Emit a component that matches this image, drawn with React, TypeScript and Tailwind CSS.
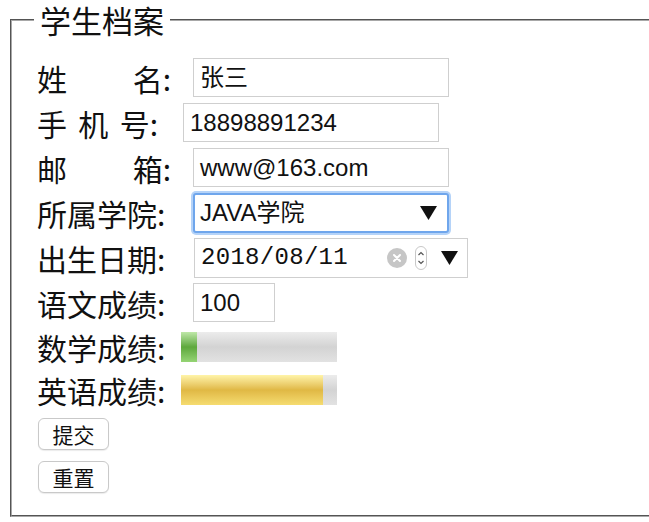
import React from "react";

const cjk = { fontFamily: '"Noto Sans CJK SC", sans-serif' };
const sans = { fontFamily: '"Liberation Sans", "Noto Sans CJK SC", sans-serif' };

function Row({ children, tall = true }: { children: React.ReactNode; tall?: boolean }) {
  return (
    <div className={`flex items-center pl-[25px] ${tall ? "h-[45px]" : "h-[43px]"}`}>
      {children}
    </div>
  );
}

function Label({ parts, width, span }: { parts: string[]; width: number; span?: number }) {
  return (
    <div className="shrink-0 text-[30px] leading-none text-[#111]" style={{ ...cjk, width }}>
      <span className="flex justify-between" style={span ? { width: span } : undefined}>
        {parts.map((p) => (
          <span key={p}>{p}</span>
        ))}
      </span>
    </div>
  );
}

function TextBox({ value, width }: { value: string; width: number }) {
  return (
    <div
      className="h-[39px] border border-[#cfcfcf] bg-white px-[6px] flex items-center text-[24px] text-[#111]"
      style={{ ...sans, width }}
    >
      {value}
    </div>
  );
}

function Meter({ value, fill }: { value: number; fill: "green" | "yellow" }) {
  return (
    <div className="h-[30px] w-[156px] bg-linear-to-b from-[#ececec] via-[#d3d3d3] to-[#e2e2e2]">
      <div
        className={`h-full ${
          fill === "green"
            ? "bg-linear-to-b from-[#bfe8a8] via-[#5ea83c] to-[#95d474]"
            : "bg-linear-to-b from-[#fff4a8] via-[#e0b844] to-[#f5dc70]"
        }`}
        style={{ width: `${value}%` }}
      />
    </div>
  );
}

function Caret() {
  return (
    <svg width="17" height="14" viewBox="0 0 17 14">
      <path d="M0 0 H17 L8.5 14 Z" fill="#111" />
    </svg>
  );
}

export default function App() {
  return (
    <div className="w-[649px] h-[522px] overflow-hidden bg-white">
      <fieldset className="ml-[10px] w-[680px] border-2 [border-style:groove] border-[#a8a8a8] pt-[15px] pb-[22px]">
        <legend
          className="ml-[22px] px-[6px] text-[31px] leading-[40px] text-[#111]"
          style={cjk}
        >
          学生档案
        </legend>

        <Row>
          <Label parts={["姓", "名:"]} width={156} span={134} />
          <TextBox value="张三" width={256} />
        </Row>
        <Row>
          <Label parts={["手", "机", "号:"]} width={146} span={121} />
          <TextBox value="18898891234" width={256} />
        </Row>
        <Row>
          <Label parts={["邮", "箱:"]} width={156} span={134} />
          <TextBox value="www@163.com" width={256} />
        </Row>
        <Row>
          <Label parts={["所属学院:"]} width={156} />
          <div
            className="h-[40px] w-[256px] rounded-[3px] border-2 border-[#6fa6ec] shadow-[0_0_0_2px_#b5d3f8] bg-white pl-[5px] pr-[10px] flex items-center justify-between text-[24px] text-[#111]"
            style={sans}
          >
            <span>JAVA学院</span>
            <Caret />
          </div>
        </Row>
        <Row>
          <Label parts={["出生日期:"]} width={157} />
          <div className="h-[40px] w-[274px] border border-[#cfcfcf] bg-white pl-[6px] pr-[9px] flex items-center">
            <span
              className="text-[24px] text-[#111] tracking-[0.3px]"
              style={{ fontFamily: '"Liberation Mono", monospace' }}
            >
              2018/08/11
            </span>
            <span className="ml-auto w-[20px] h-[20px] rounded-full bg-[#c6c6c6] flex items-center justify-center">
              <svg width="10" height="10" viewBox="0 0 10 10">
                <path d="M2 2 L8 8 M8 2 L2 8" stroke="white" strokeWidth="2" strokeLinecap="round" />
              </svg>
            </span>
            <span className="ml-[8px] w-[12px] h-[24px] rounded-full border border-[#c8c8c8] flex items-center justify-center">
              <svg width="8" height="18" viewBox="0 0 8 18">
                <path d="M1.5 6 L4 3.5 L6.5 6 M1.5 12 L4 14.5 L6.5 12" stroke="#555" strokeWidth="1.2" fill="none" />
              </svg>
            </span>
            <span className="ml-[14px] flex">
              <Caret />
            </span>
          </div>
        </Row>
        <Row>
          <Label parts={["语文成绩:"]} width={156} />
          <TextBox value="100" width={82} />
        </Row>
        <Row tall={false}>
          <Label parts={["数学成绩:"]} width={144} />
          <Meter value={10} fill="green" />
        </Row>
        <Row tall={false}>
          <Label parts={["英语成绩:"]} width={144} />
          <Meter value={91} fill="yellow" />
        </Row>

        <div className="pl-[26px] mt-[7px] flex flex-col gap-[11px] items-start">
          {["提交", "重置"].map((t) => (
            <button
              key={t}
              className="h-[32px] w-[71px] rounded-[6px] border border-[#c9c9c9] bg-white shadow-[0_1px_1px_rgba(0,0,0,0.08)] text-[21px] leading-none text-[#111]"
              style={cjk}
            >
              {t}
            </button>
          ))}
        </div>
      </fieldset>
    </div>
  );
}
